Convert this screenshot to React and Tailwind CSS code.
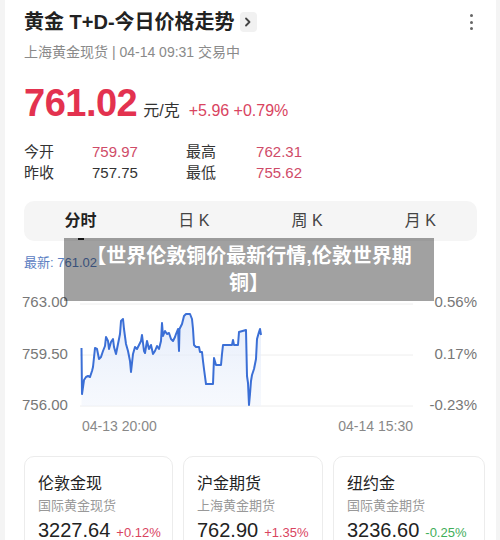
const font = { fontFamily: '"Liberation Sans", "Noto Sans CJK SC", sans-serif' }

const line = [
  [81.5, 349], [82, 395], [84, 381], [86, 378], [88, 377], [90, 378], [92, 372], [93, 368],
  [95, 349], [97, 350], [99, 360], [101, 358], [103, 352], [105, 347], [106, 338], [108, 342],
  [109, 350], [111, 343], [113, 340], [114, 348], [116, 355], [118, 345], [120, 335], [121, 322],
  [123, 320], [124, 330], [126, 345], [128, 352], [130, 362], [131, 373], [133, 355], [135, 348],
  [137, 350], [139, 346], [141, 342], [142, 336], [144, 352], [145, 354], [147, 342], [149, 350],
  [151, 346], [153, 355], [155, 352], [157, 347], [159, 350], [161, 342], [162, 324], [163, 337],
  [165, 332], [167, 335], [169, 334], [171, 340], [173, 342], [175, 338], [176, 335], [178, 330],
  [179, 352], [179.5, 330], [182, 325], [184, 317], [186, 315], [190, 315], [192, 320], [193, 330],
  [194, 346], [196, 348], [199, 348], [200, 353], [202, 353], [203, 362], [204, 370], [206, 385],
  [213, 385], [214, 359], [216, 366], [221, 366], [222, 355], [223, 346], [232, 346], [233, 341],
  [234, 346], [238, 346], [239, 333], [246, 331], [247, 377], [248, 384], [249, 406], [250, 395],
  [251, 382], [252, 376], [254, 370], [255, 365], [256, 360], [257, 340], [259, 333], [260, 330],
  [261, 336]
]

const pts = line.map(([x, y]) => `${x - 80},${y - 300}`)
const linePath = 'M' + pts.join(' L')
const areaPath = linePath + ` L${line[line.length - 1][0] - 80},107 L${line[0][0] - 80},107 Z`

const stats = [
  ['今开', '759.97', 'text-[#cf4b68]', '最高', '762.31'],
  ['昨收', '757.75', 'text-[#333]', '最低', '755.62']
]

const cards = [
  { name: '伦敦金现', sub: '国际黄金现货', price: '3227.64', chg: '+0.12%', up: true, w: 'w-[149px]' },
  { name: '沪金期货', sub: '上海黄金期货', price: '762.90', chg: '+1.35%', up: true, w: 'w-[140px]' },
  { name: '纽约金', sub: '国际黄金期货', price: '3236.60', chg: '-0.25%', up: false, w: 'w-[152px]' }
]

export default function App() {
  return (
    <div className="relative w-[500px] h-[540px] overflow-hidden bg-[#f4f4f4]" style={font}>
      <div className="ml-[5px] w-[491px] h-full bg-white px-[19px]">

        {/* Header */}
        <div className="flex items-center justify-between pt-[8px]">
          <div className="flex items-center gap-[5px]">
            <span className="text-[20px] leading-[28px] font-semibold text-[#222]">黄金 T+D-今日价格走势</span>
            <span className="w-[17px] h-[20px] rounded-[4px] bg-[#f1f1f1] flex items-center justify-center">
              <svg width="8" height="10" viewBox="0 0 8 10">
                <path d="M2 1.5 L5.5 5 L2 8.5" fill="none" stroke="#444" strokeWidth="1.8" strokeLinecap="round" strokeLinejoin="round" />
              </svg>
            </span>
          </div>
          <div className="flex flex-col gap-[3.5px] mr-[4px]">
            <span className="w-[3px] h-[3px] rounded-full bg-[#666]" />
            <span className="w-[3px] h-[3px] rounded-full bg-[#666]" />
            <span className="w-[3px] h-[3px] rounded-full bg-[#666]" />
          </div>
        </div>
        <p className="mt-[6px] text-[14px] leading-[20px] text-[#8a8a8a]">上海黄金现货 | 04-14 09:31 交易中</p>

        {/* Price */}
        <div className="mt-[21px] flex items-baseline h-[40px]">
          <span className="text-[38px] leading-[40px] font-bold text-[#e3324f] tracking-[-0.5px]">761.02</span>
          <span className="ml-[6px] text-[16px] text-[#333]">元/克</span>
          <span className="ml-[9px] text-[16px] text-[#d9445f]">+5.96 +0.79%</span>
        </div>

        {/* Stats */}
        <div className="mt-[18px]">
          {stats.map((r) => (
            <div key={r[0]} className="grid grid-cols-[68px_94px_50px_66px] text-[15px] leading-[21px]">
              <span className="text-[#333]">{r[0]}</span>
              <span className={r[2]}>{r[1]}</span>
              <span className="text-[#333]">{r[3]}</span>
              <span className="text-right text-[#cf4b68]">{r[4]}</span>
            </div>
          ))}
        </div>

        {/* Tabs */}
        <div className="mt-[18px] h-[40px] rounded-[10px] bg-[#f5f5f5] grid grid-cols-4 text-[16px]">
          <div className="relative flex items-center justify-center font-semibold text-[#222]">
            分时
            <span className="absolute bottom-[1px] w-[6px] h-[2px] bg-[#222]" />
          </div>
          <div className="flex items-center justify-center text-[#444]">日 K</div>
          <div className="flex items-center justify-center text-[#444]">周 K</div>
          <div className="flex items-center justify-center text-[#444]">月 K</div>
        </div>

        <p className="mt-[14px] text-[13px] leading-[16px] text-[#5b80c2]">最新: 761.02</p>

        {/* Chart */}
        <div className="mt-[22px] flex">
          <div className="w-[56px] h-[120px] flex flex-col justify-between text-[15px] leading-[17px] text-[#777] -ml-[2px] pr-[2px]">
            <span>763.00</span>
            <span>759.50</span>
            <span>756.00</span>
          </div>
          <svg width="333" height="110" className="mt-[6px] ml-[2px] shrink-0">
            <defs>
              <linearGradient id="fill" x1="0" y1="0" x2="0" y2="1">
                <stop offset="0" stopColor="#dfe8fa" stopOpacity="0.8" />
                <stop offset="1" stopColor="#eef3fc" stopOpacity="0.5" />
              </linearGradient>
            </defs>
            <line x1="0" y1="5" x2="333" y2="5" stroke="#eeeeee" />
            <line x1="0" y1="56" x2="333" y2="56" stroke="#eeeeee" />
            <line x1="0" y1="107" x2="333" y2="107" stroke="#eeeeee" />
            <path d={areaPath} fill="url(#fill)" />
            <path d={linePath} fill="none" stroke="#3b6fd6" strokeWidth="2" strokeLinejoin="round" />
          </svg>
          <div className="flex-1 h-[120px] flex flex-col justify-between items-end text-[15px] leading-[17px] text-[#777]">
            <span>0.56%</span>
            <span>0.17%</span>
            <span>-0.23%</span>
          </div>
        </div>
        <div className="mt-[5px] ml-[58px] w-[331px] flex justify-between text-[14px] leading-[16px] text-[#888]">
          <span>04-13 20:00</span>
          <span>04-14 15:30</span>
        </div>

        {/* Related cards */}
        <div className="mt-[22px] flex gap-[10px]">
          {cards.map((c) => (
            <div key={c.name} className={`${c.w} shrink-0 rounded-[10px] border border-[#ececec] px-[13px] pt-[16px] pb-[14px]`}>
              <p className="text-[16px] leading-[22px] text-[#222]">{c.name}</p>
              <p className="mt-[2px] text-[13px] leading-[18px] text-[#999]">{c.sub}</p>
              <div className="mt-[2px] flex items-baseline gap-[6px] whitespace-nowrap">
                <span className="text-[20px] leading-[26px] text-[#222]">{c.price}</span>
                <span className={c.up ? 'text-[13px] text-[#d9445f]' : 'text-[13px] text-[#3fae5a]'}>{c.chg}</span>
              </div>
            </div>
          ))}
        </div>
      </div>

      {/* Article overlay */}
      <div className="absolute left-[64px] top-[238px] w-[370px] h-[63px] bg-black/[0.37] flex flex-col items-center justify-center text-white font-bold text-[20px] leading-[27px] text-center">
        <span>【世界伦敦铜价最新行情,伦敦世界期</span>
        <span>铜】</span>
      </div>
    </div>
  )
}
